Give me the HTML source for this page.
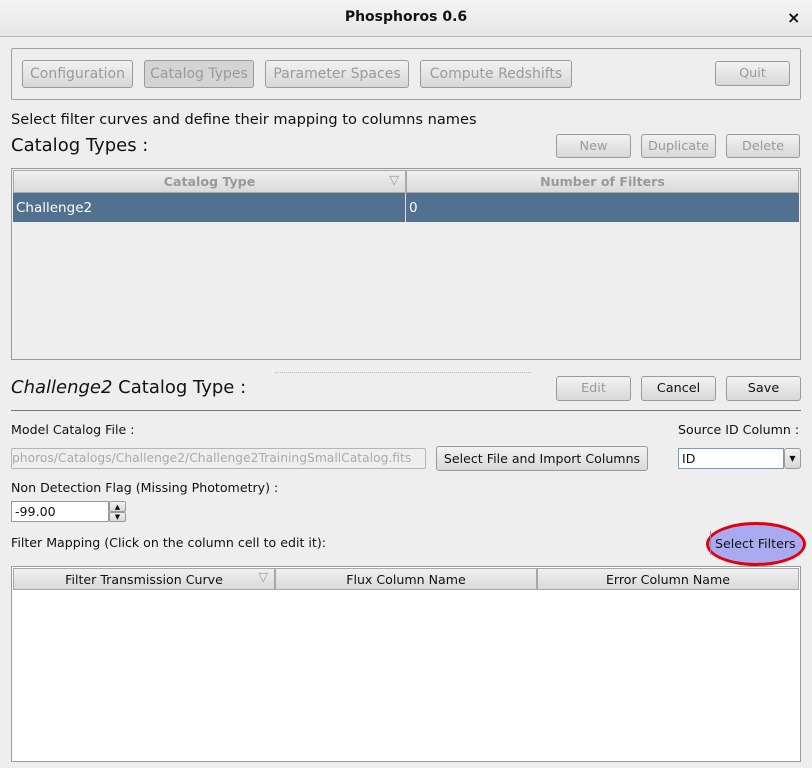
<!DOCTYPE html>
<html><head><style>
*{box-sizing:border-box;margin:0;padding:0}
body{width:812px;height:768px;background:#eeeeee;font-family:"DejaVu Sans","Liberation Sans",sans-serif;font-size:12.6px;color:#111;position:relative;overflow:hidden}
.a{position:absolute}
.btn{position:absolute;border:1px solid #9a9a9a;border-radius:3px;background:linear-gradient(#f2f2f2,#d8d8d8);text-align:center;font-size:12.8px;color:#111;display:flex;align-items:center;justify-content:center;white-space:nowrap}
.big{font-size:14px}
.dis{color:#9a9a9a}
.t{position:absolute;white-space:nowrap}
.hdr{position:absolute;background:linear-gradient(#f0f0f0,#d9d9d9);border:1px solid #a8a8a8;text-align:center;display:flex;align-items:center;justify-content:center}
</style></head><body>
<div class="a" style="left:0;top:0;width:812px;height:37px;background:linear-gradient(#f4f4f4,#e6e6e6);border-bottom:1px solid #b5b5b5"></div>
<div class="t" style="left:0;width:812px;top:9px;text-align:center;font-weight:bold;font-size:14px">Phosphoros 0.6</div>
<div class="t" style="left:787px;top:8px;font-size:16px;font-weight:bold">×</div>

<div class="a" style="left:11px;top:48px;width:790px;height:52px;border:1px solid #a0a0a0;border-radius:2px"></div>
<div class="btn dis big" style="left:22px;top:60px;width:111px;height:28px">Configuration</div>
<div class="btn dis big" style="left:144px;top:60px;width:110px;height:28px;background:#d4d4d4">Catalog Types</div>
<div class="btn dis big" style="left:265px;top:60px;width:144px;height:28px">Parameter Spaces</div>
<div class="btn dis big" style="left:420px;top:60px;width:152px;height:28px">Compute Redshifts</div>
<div class="btn dis" style="left:715px;top:61px;width:75px;height:25px">Quit</div>

<div class="t" style="left:11px;top:111px;font-size:14.6px">Select filter curves and define their mapping to columns names</div>
<div class="t" style="left:11px;top:135px;font-size:18px">Catalog Types :</div>
<div class="btn dis" style="left:556px;top:134px;width:75px;height:24px">New</div>
<div class="btn dis" style="left:641px;top:134px;width:75px;height:24px">Duplicate</div>
<div class="btn dis" style="left:726px;top:134px;width:74px;height:24px">Delete</div>

<div class="a" style="left:11px;top:168px;width:790px;height:192px;border:1px solid #9a9a9a;background:#eeeeee"></div>
<div class="hdr dis" style="left:13px;top:170px;width:393px;height:23px;font-weight:bold;color:#999">Catalog Type<span style="position:absolute;right:6px;top:1px;font-weight:normal">▽</span></div>
<div class="hdr dis" style="left:406px;top:170px;width:393px;height:23px;font-weight:bold;color:#999">Number of Filters</div>
<div class="a" style="left:13px;top:193px;width:786px;height:29px;background:#52708f"></div>
<div class="a" style="left:405px;top:193px;width:1px;height:29px;background:#ddd"></div>
<div class="t" style="left:16px;top:200px;color:#fff;font-size:13.5px">Challenge2</div>
<div class="t" style="left:409px;top:200px;color:#fff;font-size:13.5px">0</div>

<div class="a" style="left:275px;top:372px;width:256px;height:0;border-top:1px dotted #bbb"></div>
<div class="t" style="left:11px;top:377px;font-size:18px"><i>Challenge2</i> Catalog Type :</div>
<div class="btn dis" style="left:556px;top:376px;width:75px;height:25px">Edit</div>
<div class="btn" style="left:641px;top:376px;width:75px;height:25px">Cancel</div>
<div class="btn" style="left:726px;top:376px;width:75px;height:25px">Save</div>
<div class="a" style="left:11px;top:410px;width:790px;height:1px;background:#777"></div>

<div class="t" style="left:11px;top:422px">Model Catalog File :</div>
<div class="t" style="left:678px;top:422px">Source ID Column :</div>
<div class="a" style="left:11px;top:448px;width:415px;height:21px;border:1px solid #b5b5b5;border-radius:2px;background:#eee;overflow:hidden"><span class="t dis" style="left:0;top:2px;color:#aaa;font-size:12.3px">phoros/Catalogs/Challenge2/Challenge2TrainingSmallCatalog.fits</span></div>
<div class="btn" style="left:436px;top:446px;width:212px;height:25px;font-size:12.6px">Select File and Import Columns</div>
<div class="a" style="left:678px;top:448px;width:106px;height:21px;border:1px solid #7a9ac0;background:#fff"><span class="t" style="left:3px;top:2px">ID</span></div>
<div class="btn" style="left:784px;top:448px;width:17px;height:21px;font-size:8px">▼</div>

<div class="t" style="left:11px;top:480px">Non Detection Flag (Missing Photometry) :</div>
<div class="a" style="left:11px;top:501px;width:98px;height:21px;border:1px solid #999;background:#fff"><span class="t" style="left:3px;top:2px">-99.00</span></div>
<div class="btn" style="left:109px;top:501px;width:17px;height:11px;font-size:7px;border-radius:2px">▲</div>
<div class="btn" style="left:109px;top:512px;width:17px;height:10px;font-size:7px;border-radius:2px">▼</div>

<div class="t" style="left:11px;top:535px">Filter Mapping (Click on the column cell to edit it):</div>
<div class="a" style="left:706px;top:522px;width:100px;height:44px;border:3px solid #e3000b;border-radius:50%;background:#aaaaf0"></div>
<div class="t" style="left:715px;top:536px;color:#111">Select Filters</div>
<div class="a" style="left:710px;top:531px;width:1px;height:24px;background:#8888c8"></div>

<div class="a" style="left:11px;top:566px;width:790px;height:196px;border:1px solid #9a9a9a;background:#fff"></div>
<div class="hdr" style="left:13px;top:568px;width:262px;height:22px">Filter Transmission Curve<span style="position:absolute;right:6px;top:0;color:#999">▽</span></div>
<div class="hdr" style="left:275px;top:568px;width:262px;height:22px">Flux Column Name</div>
<div class="hdr" style="left:537px;top:568px;width:262px;height:22px">Error Column Name</div>
</body></html>
